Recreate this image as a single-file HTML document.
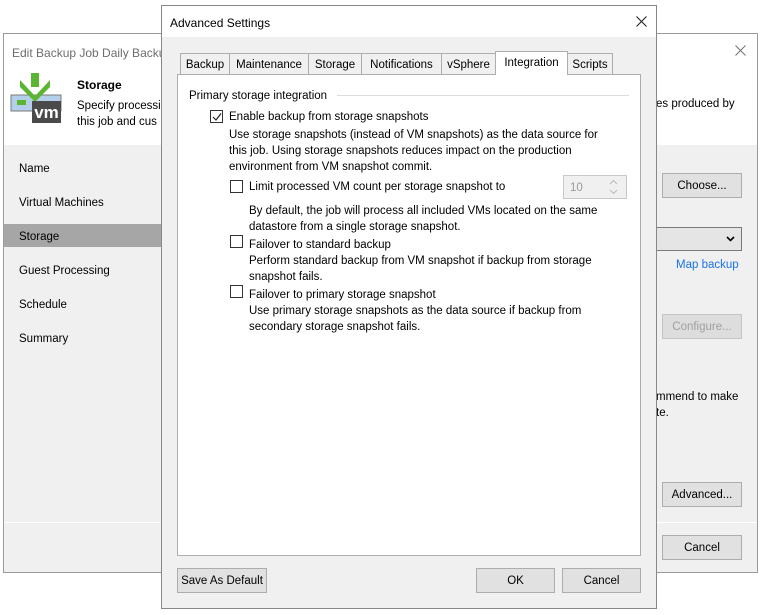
<!DOCTYPE html>
<html><head><style>
*{margin:0;padding:0;box-sizing:border-box}
body{width:761px;height:615px;background:#fff;font-family:"Liberation Sans",sans-serif;font-size:11.5px;color:#000;position:relative;overflow:hidden}
.a{position:absolute;white-space:nowrap}
.t{position:absolute;white-space:nowrap;margin-top:2px}
.btn{position:absolute;background:#e1e1e1;border:1px solid #adadad;text-align:center;line-height:24px}
.cb{position:absolute;width:13px;height:13px;border:1px solid #333;background:#fff}
.tab{position:absolute;top:53px;height:21px;border:1px solid #adadad;border-bottom:none;background:#f0f0f0;text-align:center;line-height:22px}
</style></head><body>
<!-- back window -->
<div class="a" style="left:3px;top:33px;width:755px;height:540px;border:1px solid #9a9a9a;background:#f0f0f0"></div>
<div class="a" style="left:4px;top:34px;width:753px;height:111px;background:#fff"></div>
<div class="t" style="left:12px;top:44px;color:#6d6d6d;font-size:12px">Edit Backup Job Daily Backup</div>
<svg class="a" style="left:735px;top:45px" width="11" height="11"><path d="M0.5 0.5L10.5 10.5M10.5 0.5L0.5 10.5" stroke="#777" stroke-width="1.1"/></svg>
<svg class="a" style="left:10px;top:72px" width="55" height="52" viewBox="0 0 55 52">
<rect x="1" y="23" width="50" height="16" fill="#b4cfe9" stroke="#7a7a7a"/>
<rect x="7" y="28" width="9" height="5" fill="#5cb531"/>
<rect x="21" y="1" width="8" height="14" fill="#5cb531"/>
<polygon points="10,8 25,24 40,8 40,15 25,30 10,15" fill="#5cb531"/>
<rect x="22" y="29" width="29" height="22" fill="#4a4a4a"/>
<text x="36.5" y="46" fill="#fff" font-family="Liberation Sans" font-size="17" font-weight="bold" text-anchor="middle">vm</text>
</svg>
<div class="t" style="left:77px;top:76px;font-weight:bold;font-size:12px">Storage</div>
<div class="t" style="left:77px;top:96px;line-height:16px">Specify processi<br>this job and cus</div>
<div class="t" style="left:656px;top:96px">es produced by</div>
<div class="a" style="left:4px;top:145px;width:157px;height:377px;background:#f0f0f0"></div>
<div class="a" style="left:4px;top:224px;width:157px;height:23px;background:#a6a6a6"></div>
<div class="t" style="left:19px;top:161px">Name</div>
<div class="t" style="left:19px;top:195px">Virtual Machines</div>
<div class="t" style="left:19px;top:229px">Storage</div>
<div class="t" style="left:19px;top:263px">Guest Processing</div>
<div class="t" style="left:19px;top:297px">Schedule</div>
<div class="t" style="left:19px;top:331px">Summary</div>
<div class="btn" style="left:662px;top:173px;width:80px;height:25px">Choose...</div>
<div class="a" style="left:656px;top:227px;width:86px;height:24px;border:1px solid #7a7a7a;background:#e5e5e5"></div>
<svg class="a" style="left:726px;top:236px" width="9" height="6"><path d="M1 1L4.5 4.5L8 1" stroke="#000" stroke-width="1.6" fill="none"/></svg>
<div class="t" style="left:676px;top:257px;color:#1a73e8">Map backup</div>
<div class="btn" style="left:662px;top:314px;width:80px;height:25px;color:#a0a0a0;background:#ddd;border-color:#c4c4c4">Configure...</div>
<div class="t" style="left:656px;top:387px;line-height:16px">mmend to make<br>te.</div>
<div class="btn" style="left:662px;top:482px;width:80px;height:25px">Advanced...</div>
<div class="a" style="left:4px;top:522px;width:753px;height:1px;background:#fff"></div>
<div class="btn" style="left:662px;top:535px;width:80px;height:25px">Cancel</div>
<!-- front dialog -->
<div class="a" style="left:161px;top:5px;width:496px;height:604px;border:1px solid #888;background:#f0f0f0"></div>
<div class="a" style="left:162px;top:6px;width:494px;height:31px;background:#fff"></div>
<div class="t" style="left:170px;top:14px;font-size:12px">Advanced Settings</div>
<svg class="a" style="left:636px;top:16px" width="11" height="11"><path d="M0.5 0.5L10.5 10.5M10.5 0.5L0.5 10.5" stroke="#222" stroke-width="1.1"/></svg>
<div class="a" style="left:177px;top:74px;width:464px;height:482px;border:1px solid #adadad;background:#fff"></div>
<div class="tab" style="left:180px;width:50px">Backup</div>
<div class="tab" style="left:229px;width:80px">Maintenance</div>
<div class="tab" style="left:308px;width:54px">Storage</div>
<div class="tab" style="left:361px;width:81px">Notifications</div>
<div class="tab" style="left:441px;width:55px">vSphere</div>
<div class="tab" style="left:495px;top:51px;height:24px;width:73px;background:#fff">Integration</div>
<div class="tab" style="left:567px;width:46px">Scripts</div>
<div class="t" style="left:189px;top:88px">Primary storage integration</div>
<div class="a" style="left:337px;top:95px;width:292px;height:1px;background:#dcdcdc"></div>
<div class="cb" style="left:210px;top:110px"></div>
<svg class="a" style="left:212px;top:112px" width="10" height="10"><path d="M1 5L4 8L9 1.5" stroke="#222" stroke-width="1.2" fill="none"/></svg>
<div class="t" style="left:229px;top:109px">Enable backup from storage snapshots</div>
<div class="t" style="left:229px;top:125px;line-height:16px">Use storage snapshots (instead of VM snapshots) as the data source for<br>this job. Using storage snapshots reduces impact on the production<br>environment from VM snapshot commit.</div>
<div class="cb" style="left:230px;top:180px"></div>
<div class="t" style="left:249px;top:179px">Limit processed VM count per storage snapshot to</div>
<div class="a" style="left:563px;top:175px;width:64px;height:24px;border:1px solid #c8c8c8;background:#f0f0f0;color:#999;padding:6px 0 0 6px">10</div>
<svg class="a" style="left:609px;top:179px" width="9" height="16"><path d="M1 5L4.5 1.5L8 5M1 11L4.5 14.5L8 11" stroke="#bbb" fill="none"/></svg>
<div class="t" style="left:249px;top:201px;line-height:16px">By default, the job will process all included VMs located on the same<br>datastore from a single storage snapshot.</div>
<div class="cb" style="left:230px;top:235px"></div>
<div class="t" style="left:249px;top:235px;line-height:16px">Failover to standard backup<br>Perform standard backup from VM snapshot if backup from storage<br>snapshot fails.</div>
<div class="cb" style="left:230px;top:285px"></div>
<div class="t" style="left:249px;top:285px;line-height:16px">Failover to primary storage snapshot<br>Use primary storage snapshots as the data source if backup from<br>secondary storage snapshot fails.</div>
<div class="btn" style="left:177px;top:568px;width:90px;height:25px">Save As Default</div>
<div class="btn" style="left:476px;top:568px;width:79px;height:25px">OK</div>
<div class="btn" style="left:562px;top:568px;width:79px;height:25px">Cancel</div>
</body></html>
